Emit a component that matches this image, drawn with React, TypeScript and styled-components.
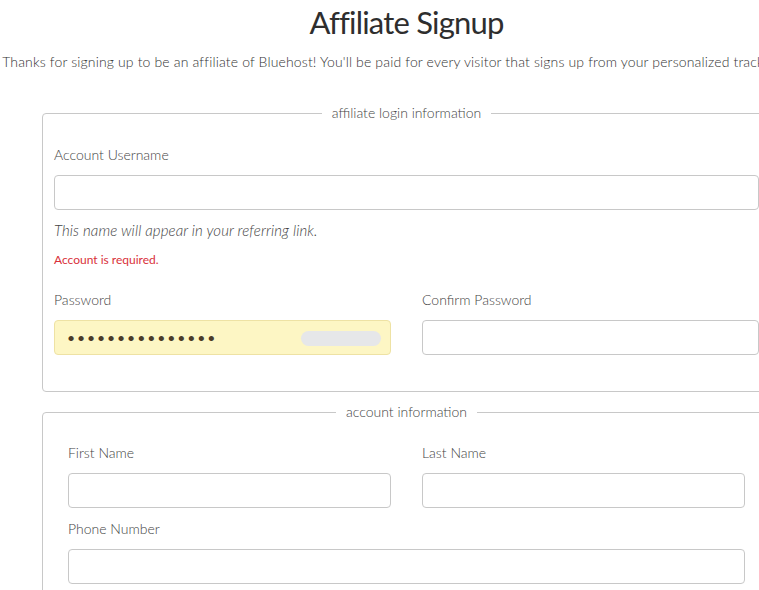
import React from "react";
import styled, { createGlobalStyle } from "styled-components";

const Global = createGlobalStyle`
  html, body { margin: 0; padding: 0; background: #fff; overflow: hidden; }
  body { font-family: Lato, "Open Sans", sans-serif; color: #333; }
  * { box-sizing: border-box; }
`;

const Page = styled.div`
  width: 813px;
`;

const Title = styled.h1`
  margin: 0;
  text-align: center;
  font-size: 31px;
  font-weight: 400;
  line-height: 44px;
  color: #2e2e2e;
  letter-spacing: -0.8px;
`;

const Intro = styled.p`
  margin: 8px 0 0;
  text-align: center;
  font-size: 14px;
  line-height: 20px;
  white-space: nowrap;
  color: #333;
  font-weight: 300;
  letter-spacing: 0.15px;
`;

const Fieldset = styled.fieldset<{ $pad: number; $top: number; $bottom: number }>`
  margin: ${(p) => p.$top}px 42px 0;
  border: 1px solid #c8c8c8;
  border-radius: 4px;
  padding: 0 ${(p) => p.$pad}px ${(p) => p.$bottom}px;
  min-width: 0;
`;

const Legend = styled.legend`
  margin: 0 auto;
  padding: 0 10px;
  font-size: 14px;
  line-height: 20px;
  color: #444;
  font-weight: 300;
`;

const Label = styled.label<{ $top: number }>`
  display: block;
  margin-top: ${(p) => p.$top}px;
  margin-bottom: 10px;
  font-size: 14px;
  line-height: 20px;
  color: #444;
  font-weight: 300;
`;

const Input = styled.input`
  display: block;
  width: 100%;
  height: 35px;
  border: 1px solid #c8c8c8;
  border-radius: 4px;
  background: #fff;
  padding: 0 12px;
  font-family: inherit;
  font-size: 14px;
  outline: none;
`;

const Help = styled.div`
  margin-top: 10px;
  font-size: 15px;
  line-height: 20px;
  font-style: italic;
  font-weight: 300;
  color: #444;
  letter-spacing: 0.1px;
`;

const Error = styled.div`
  margin-top: 12px;
  font-size: 12px;
  line-height: 16px;
  color: #d9303a;
  font-weight: 400;
`;

const Row = styled.div`
  display: grid;
  grid-template-columns: 1fr 1fr;
  column-gap: 31px;
`;

const AutofillWrap = styled.div`
  position: relative;
`;

const PasswordInput = styled(Input)`
  background: #fdf6c4;
  border-color: #eee2a4;
  color: #4a3b28;
  font-size: 14px;
  letter-spacing: 1.9px;
`;

const Pill = styled.span`
  position: absolute;
  left: 247px;
  top: 11px;
  width: 80px;
  height: 15px;
  border-radius: 8px;
  background: #e6e7e9;
`;

export default function App() {
  return (
    <>
      <Global />
      <Page>
        <Title>Affiliate Signup</Title>
        <Intro>
          Thanks for signing up to be an affiliate of Bluehost! You'll be paid for every visitor that signs up from your personalized tracking link.
        </Intro>
        <Fieldset $pad={11} $top={31} $bottom={36}>
          <Legend>affiliate login information</Legend>
          <Label $top={22}>Account Username</Label>
          <Input type="text" />
          <Help>This name will appear in your referring link.</Help>
          <Error>Account is required.</Error>
          <Row>
            <div>
              <Label $top={22}>Password</Label>
              <AutofillWrap>
                <PasswordInput type="password" defaultValue="passwordpasswor" readOnly />
                <Pill />
              </AutofillWrap>
            </div>
            <div>
              <Label $top={22}>Confirm Password</Label>
              <Input type="password" />
            </div>
          </Row>
        </Fieldset>
        <Fieldset $pad={25} $top={10} $bottom={30}>
          <Legend>account information</Legend>
          <Row>
            <div>
              <Label $top={21}>First Name</Label>
              <Input type="text" />
            </div>
            <div>
              <Label $top={21}>Last Name</Label>
              <Input type="text" />
            </div>
          </Row>
          <Label $top={11}>Phone Number</Label>
          <Input type="tel" />
        </Fieldset>
      </Page>
    </>
  );
}
